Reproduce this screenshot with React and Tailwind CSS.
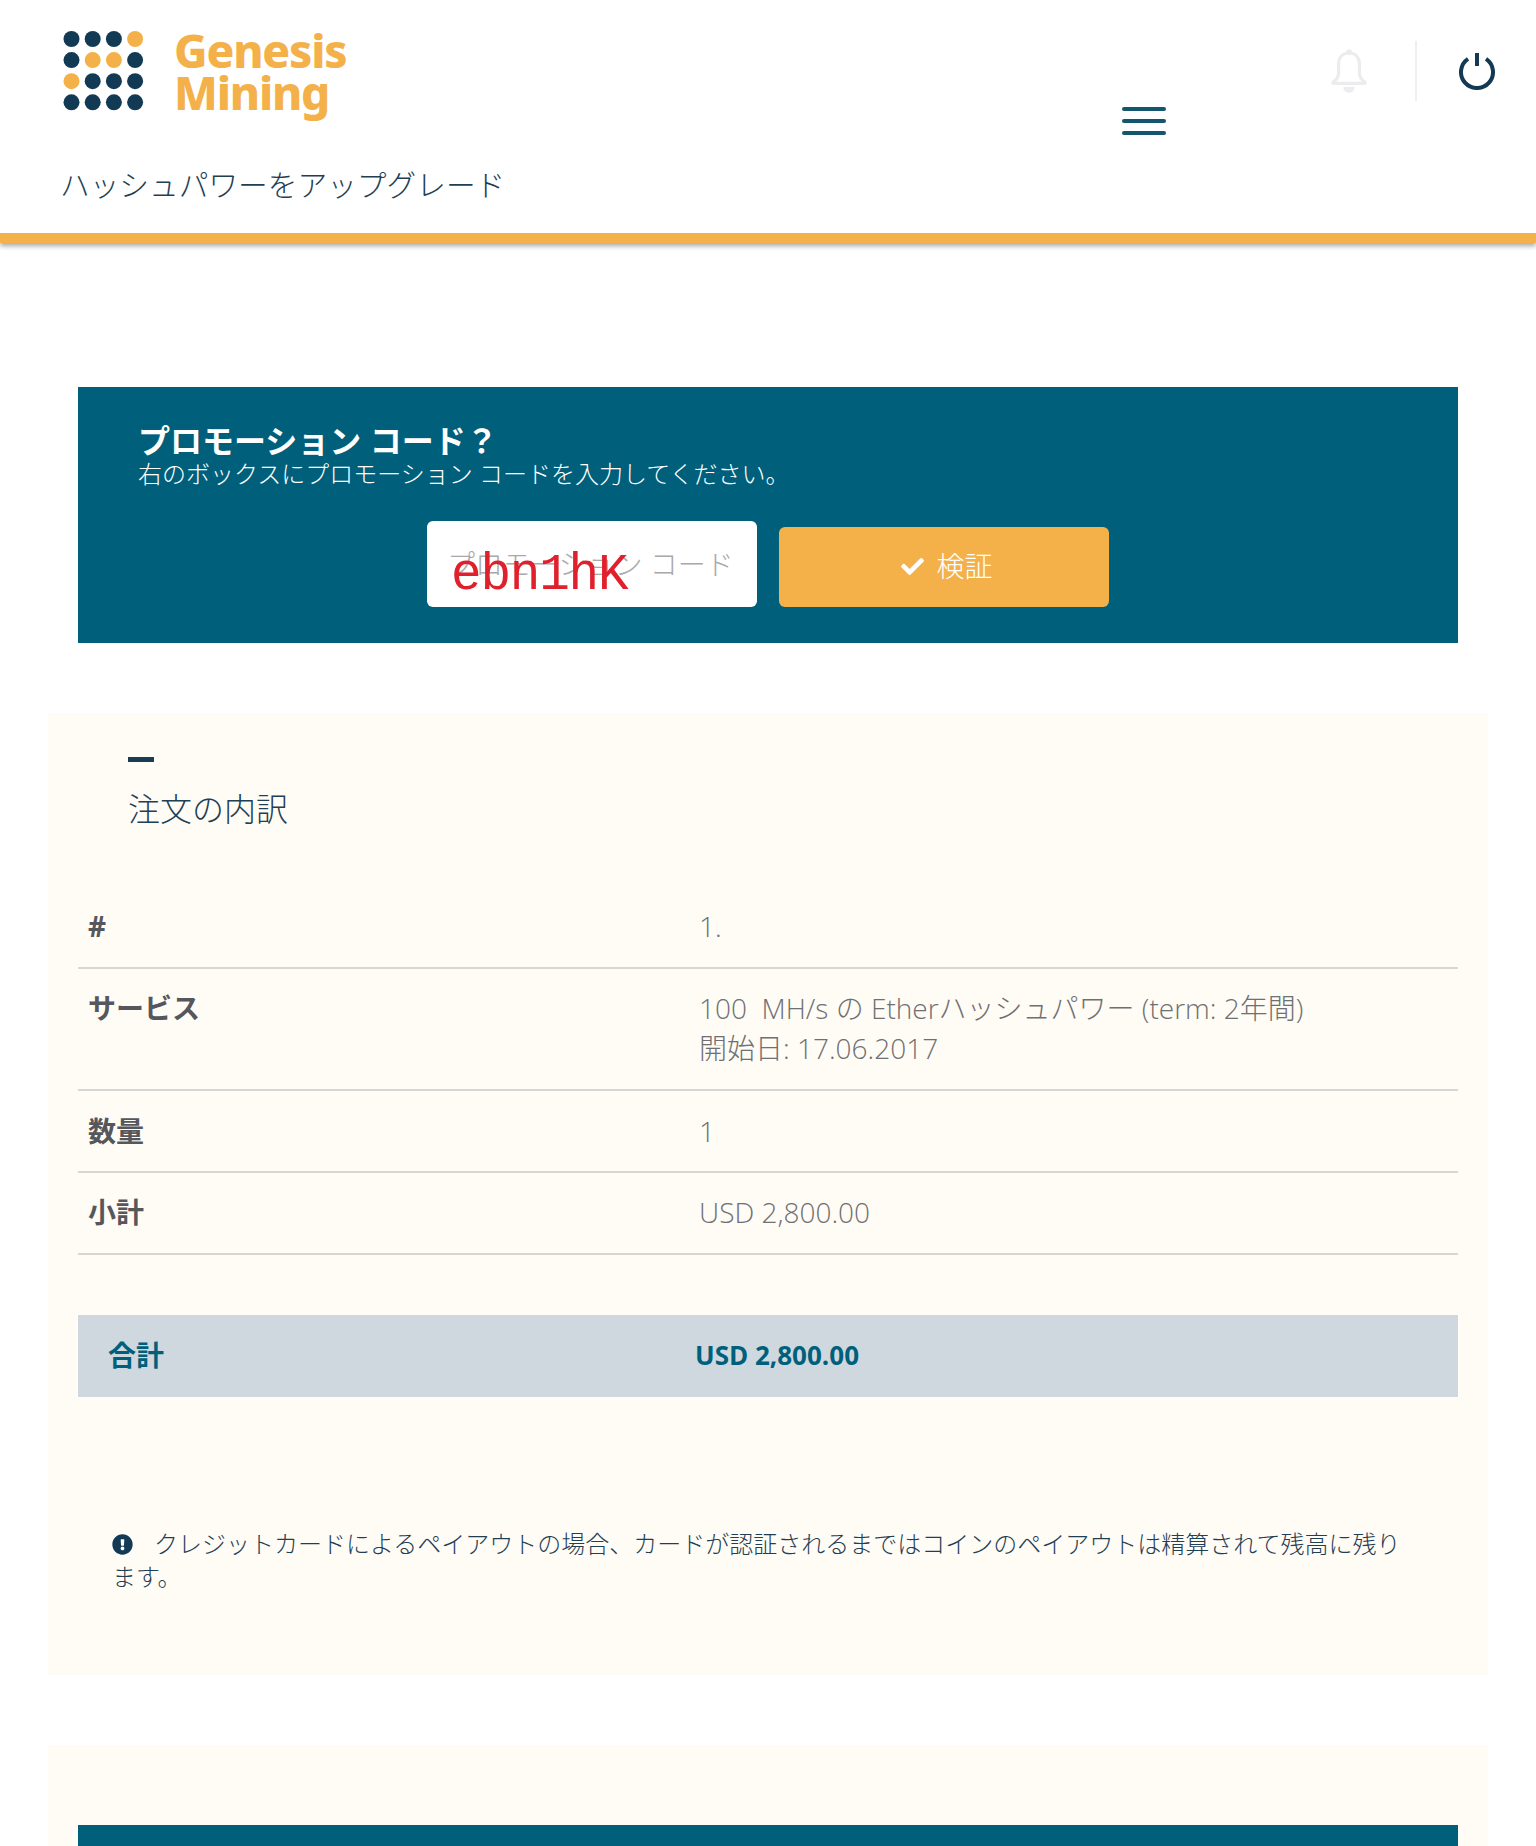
import { FaCheck, FaExclamationCircle } from "react-icons/fa";

const dots = [
  ["n", "n", "n", "o"],
  ["n", "o", "o", "n"],
  ["o", "n", "n", "n"],
  ["n", "n", "n", "n"],
];

const Logo = () => (
  <svg width="81" height="80" viewBox="0 0 81 80" className="shrink-0">
    {dots.map((row, y) =>
      row.map((c, x) => (
        <circle
          key={`${x}-${y}`}
          cx={8.5 + x * 21.2}
          cy={8 + y * 21.1}
          r="8"
          fill={c === "n" ? "#133a55" : "#f4b14a"}
        />
      ))
    )}
  </svg>
);

const Bell = () => (
  <svg width="36" height="46" viewBox="0 0 38 48" fill="none">
    <path
      d="M19 5c-7 0-11 5-11 12v9c0 4-2 7-6 10v1h34v-1c-4-3-6-6-6-10v-9c0-7-4-12-11-12z"
      stroke="#ececee"
      strokeWidth="3.4"
      strokeLinejoin="round"
    />
    <circle cx="19" cy="4" r="3" fill="#ececee" />
    <path d="M13 41h12c0 4-3 6-6 6s-6-2-6-6z" fill="#ececee" />
  </svg>
);

const Power = () => (
  <svg width="36" height="37" viewBox="0 0 36 37" fill="none" stroke="#133a55">
    <path d="M9 5.8A16 16 0 1 0 27 5.8" strokeWidth="4" />
    <path d="M18 0v13" strokeWidth="4" />
  </svg>
);

const Row = ({ label, className, children }) => (
  <div className={`flex border-b-2 border-[#d6d6d4] pl-[10px] ${className}`}>
    <div className="w-[611px] shrink-0 font-bold text-[#55575c]">{label}</div>
    <div className="font-light text-[#6f7073]">{children}</div>
  </div>
);

const App = () => {
  return (
    <div
      className="h-[1846px] overflow-hidden bg-white text-[#1f3f55]"
      style={{ fontFamily: '"Open Sans", "Noto Sans CJK JP", sans-serif' }}
    >
      <header className="relative z-10 h-[243px] border-b-[10px] border-[#f4b14a] bg-white shadow-[0_3px_5px_rgba(0,0,0,0.35)]">
        <div className="flex h-[165px] items-start pl-[63px] pr-[41px] pt-[31px]">
          <div className="flex w-[1059px] shrink-0 items-start">
            <Logo />
            <div
              className="ml-[30px] -mt-[2px] text-[46px] font-extrabold leading-[42px] tracking-[-1.2px] text-[#f4b14a]"
              style={{ fontFamily: '"Noto Sans", sans-serif' }}
            >
              <div>Genesis</div>
              <div>Mining</div>
            </div>
          </div>
          <button className="mt-[76px] flex w-[44px] flex-col gap-[8px]">
            <span className="h-[4px] rounded-full bg-[#15566f]"></span>
            <span className="h-[4px] rounded-full bg-[#15566f]"></span>
            <span className="h-[4px] rounded-full bg-[#15566f]"></span>
          </button>
          <div className="ml-auto flex items-start">
            <div className="mt-[17px]">
              <Bell />
            </div>
            <div className="ml-[48px] mt-[10px] h-[60px] w-[2px] bg-[#efefef]"></div>
            <div className="ml-[42px] mt-[22px]">
              <Power />
            </div>
          </div>
        </div>
        <div className="pl-[60px] text-[29.7px] font-light leading-[40px]">
          ハッシュパワーをアップグレード
        </div>
      </header>

      <main className="flex flex-col">
        <section className="mx-[78px] mt-[144px] h-[256px] bg-[#00607b] px-[60px] pt-[35px] text-white">
          <h2 className="text-[32px] font-bold leading-[37px]">プロモーション コード？</h2>
          <p className="text-[24px] font-light leading-[29px]">
            右のボックスにプロモーション コードを入力してください。
          </p>
          <div className="ml-[289px] mt-[33px] flex items-end gap-[22px]">
            <div className="relative h-[86px] w-[330px]">
              <input
                placeholder="プロモーション コード"
                className="h-full w-full rounded-[6px] bg-white px-[20px] text-[28px] font-light placeholder:text-[#a9a9a9]"
              />
              <span
                className="absolute left-[24px] top-[28px] text-[51px] leading-[54px] tracking-[-1.2px] text-[#e0202c]"
                style={{ fontFamily: '"Liberation Mono", monospace' }}
              >
                ebn1hK
              </span>
            </div>
            <button className="flex h-[80px] w-[330px] items-center justify-center gap-[12px] rounded-[6px] bg-[#f4b14a] pb-[2px] pl-[6px] text-[28px] font-light text-white">
              <FaCheck className="text-[23px]" />
              検証
            </button>
          </div>
        </section>

        <section className="mx-[48px] mt-[70px] h-[962px] bg-[#fffcf6] px-[30px] pt-[44px]">
          <div className="ml-[50px] h-[5px] w-[26px] bg-[#1a3c55]"></div>
          <h2 className="ml-[50px] mt-[25px] text-[32px] font-light leading-[44px]">注文の内訳</h2>
          <div className="mt-[75px] text-[28px] leading-[40px]">
            <Row label="#" className="h-[63px]">1.</Row>
            <Row label="サービス" className="h-[122px] pt-[19px]">
              <div>100&nbsp; MH/s の Etherハッシュパワー (term: 2年間)</div>
              <div>開始日: 17.06.2017</div>
            </Row>
            <Row label="数量" className="h-[82px] pt-[20px]">1</Row>
            <Row label="小計" className="h-[82px] pt-[19px]">USD 2,800.00</Row>
          </div>
          <div className="mt-[60px] flex h-[82px] items-center bg-[#cfd8de] pb-[2px] pl-[30px] text-[26px] font-bold text-[#00607b]">
            <div className="w-[587px] shrink-0 text-[28px]">合計</div>
            <div>USD 2,800.00</div>
          </div>
          <p className="ml-[34px] mt-[130px] w-[1300px] text-[24px] font-light leading-[33px]">
            <FaExclamationCircle className="mr-[21px] inline-block align-[-2px] text-[21px] text-[#133a55]" />
            クレジットカードによるペイアウトの場合、カードが認証されるまではコインのペイアウトは精算されて残高に残ります。
          </p>
        </section>

        <section className="mx-[48px] mt-[70px] h-[200px] bg-[#fffcf6] px-[30px] pt-[80px]">
          <div className="h-[100px] bg-[#00607b]"></div>
        </section>
      </main>
    </div>
  );
};

export default App;
